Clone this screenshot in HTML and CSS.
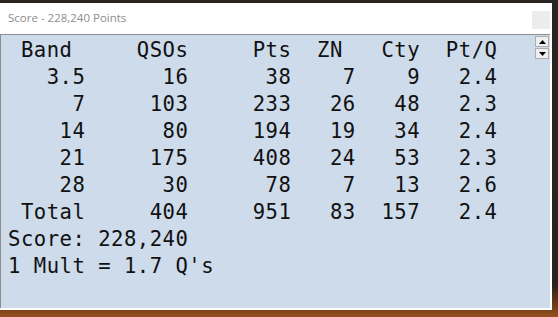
FILE: index.html
```html
<!DOCTYPE html>
<html lang="en">
<head>
    <meta charset="UTF-8">
    <title>Score</title>
    <link rel="stylesheet" href="styles.css">
</head>
<body>
<div class="desk">
    <div class="win">
        <div class="titlebar">
            <span class="title">Score - 228,240 Points</span>
            <span class="closebtn"></span>
        </div>
        <div class="client">
<pre class="score"> Band     QSOs     Pts  ZN   Cty  Pt/Q
   3.5      16      38    7    9   2.4
     7     103     233   26   48   2.3
    14      80     194   19   34   2.4
    21     175     408   24   53   2.3
    28      30      78    7   13   2.6
 Total     404     951   83  157   2.4
Score: 228,240
1 Mult = 1.7 Q's</pre>
            <div class="spin">
                <span class="up"><svg width="7" height="4" viewBox="0 0 7 4"><path d="M3.5 0L7 4H0z" fill="#000"/></svg></span>
                <span class="dn"><svg width="7" height="4" viewBox="0 0 7 4"><path d="M0 0H7L3.5 4z" fill="#000"/></svg></span>
            </div>
        </div>
    </div>
</div>
</body>
</html>
```
FILE: styles.css
```css
body{ margin: 0; padding: 0; }
.desk{ width: 558px; height: 317px; overflow: hidden;
       background: linear-gradient(to bottom, #2b2522 0%, #2a2220 90%, #6e3a18 96%, #93501f 100%); }
.win{ width: 552px; height: 307px; margin-top: 3px; background: #fff; display: flex; flex-direction: column; }
.titlebar{ height: 31px; display: flex; align-items: center; padding-left: 8px; }
.title{ flex: 1; font-family: "Open Sans", "Noto Sans", sans-serif; font-size: 11.5px; color: #8d8d8d; margin-top: -3px; }
.closebtn{ width: 18px; height: 18px; background: #ececec; margin-right: 2px; margin-top: 2px; }
.client{ position: relative; height: 274px; width: 550px; box-sizing: border-box;
         border-top: 1px solid #8e8e8e; border-left: 1px solid #8e8e8e; background: #cddbeb; }
.score{ margin: 0; padding: 2px 0 0 7px; font-family: "DejaVu Sans Mono", monospace; font-size: 20.6px;
        letter-spacing: 0.48px; line-height: 27px; color: #111; }
.spin{ position: absolute; right: 1px; top: 1px; width: 14px; display: flex; flex-direction: column; gap: 1px; }
.spin span{ height: 11px; box-sizing: border-box; border: 1px solid #acacac; background: #f0f0f0;
            display: flex; align-items: center; justify-content: center; }
.spin svg{ display: block; }
```
